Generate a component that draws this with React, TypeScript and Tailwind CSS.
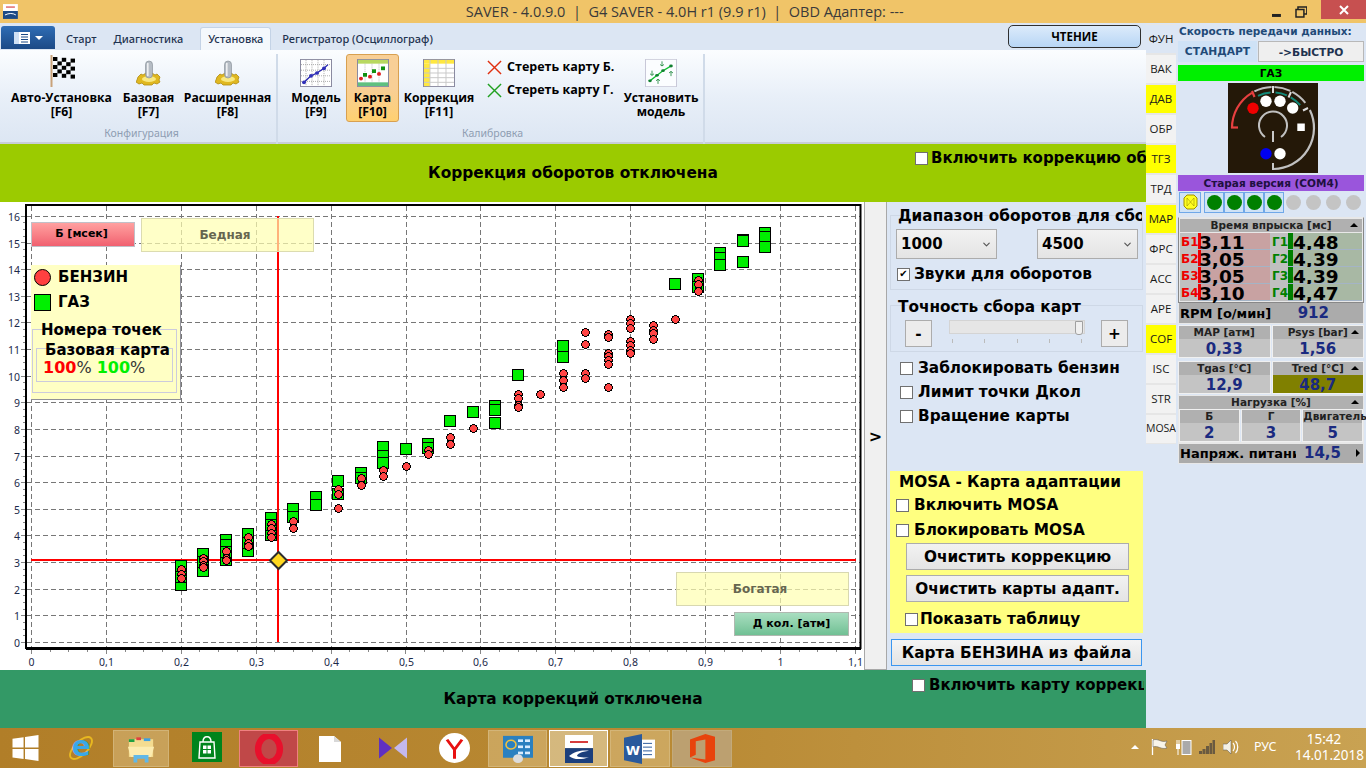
import type { ReactNode } from "react";
import { ChevronDown } from "lucide-react";

const bold = "font-['DejaVu_Sans',sans-serif] font-bold";

const tabs = [
  ["ФУН", "sel"], ["ВАК", ""], ["ДАВ", "y"], ["ОБР", ""], ["ТГЗ", "y"], ["ТРД", ""], ["МАР", "y"],
  ["ФРС", ""], ["АСС", ""], ["АРЕ", ""], ["COF", "y"], ["ISC", ""], ["STR", ""], ["MOSA", ""],
];

// chart points, page coordinates read off the picture
const squares: [number, number][] = [
  [181, 566], [181, 585], [181, 577], [203, 554], [203, 571], [203, 562],
  [226, 540], [226, 545], [226, 560], [226, 552], [248, 534], [248, 551], [248, 543],
  [271, 518], [271, 535], [271, 525], [293, 509], [293, 517], [316, 497], [316, 505],
  [338, 481], [338, 494], [361, 473], [361, 478], [383, 447], [383, 456], [383, 463], [406, 449],
  [428, 444], [428, 448], [450, 421], [473, 412], [495, 406], [495, 410], [495, 423], [518, 375],
  [563, 346], [563, 357], [675, 284], [698, 279], [698, 287], [720, 253], [720, 258], [720, 265],
  [743, 240], [743, 241], [743, 262], [765, 233], [765, 237], [765, 247],
];
const reds: [number, number][] = [
  [181, 569], [181, 574], [181, 578], [203, 558], [203, 561], [203, 565], [203, 567],
  [226, 551], [226, 558], [226, 560], [248, 537], [248, 543], [248, 546],
  [271, 524], [271, 528], [271, 533], [271, 537], [293, 521], [293, 528],
  [338, 489], [338, 494], [338, 508], [361, 478], [361, 485], [383, 470], [383, 476], [406, 466],
  [428, 450], [428, 454], [450, 437], [450, 444], [473, 428],
  [518, 394], [518, 398], [518, 405], [518, 407], [540, 394],
  [563, 373], [563, 380], [563, 387], [585, 332], [585, 344], [585, 373], [585, 378],
  [608, 334], [608, 337], [608, 353], [608, 356], [608, 360], [608, 364], [608, 387],
  [630, 319], [630, 323], [630, 328], [630, 341], [630, 345], [630, 350], [630, 353],
  [653, 325], [653, 330], [653, 333], [653, 339], [675, 319], [698, 280], [698, 284], [698, 291],
];

const xTicks = ["0", "0,1", "0,2", "0,3", "0,4", "0,5", "0,6", "0,7", "0,8", "0,9", "1", "1,1"];

function Chart() {
  const gx = xTicks.map((_, i) => Math.round(31 + i * 74.9) + 0.5);
  const gy = Array.from({ length: 17 }, (_, i) => Math.round(642 - i * 26.63) + 0.5);
  return (
    <svg viewBox="0 202 864 468" className="block h-[468px] w-[864px]">
      <rect x="0" y="202" width="864" height="468" fill="#fff" />
      {gx.map((x) => (
        <line key={x} x1={x} x2={x} y1="206" y2="647" stroke="#777" strokeDasharray="5 3" />
      ))}
      {gy.map((y) => (
        <line key={y} x1="27" x2="860" y1={y} y2={y} stroke="#777" strokeDasharray="5 3" />
      ))}
      {Array.from({ length: 45 }, (_, i) => (
        <line key={i} x1={Math.round(31 + i * 18.72) + 0.5} x2={Math.round(31 + i * 18.72) + 0.5} y1="649" y2={i % 4 === 0 ? 654 : 652} stroke="#888" />
      ))}
      {Array.from({ length: 65 }, (_, i) => (
        <line key={i} x1={i % 4 === 0 ? 21 : 23} x2="25" y1={Math.round(642 - i * 6.66) + 0.5} y2={Math.round(642 - i * 6.66) + 0.5} stroke="#888" />
      ))}
      <path d="M26 205H860.5V648H26Z" fill="none" stroke="#000" strokeWidth="2" />
      <line x1="26" x2="861" y1="648.500" y2="648.500" stroke="#000" strokeWidth="3" />
      {gx.map((x, i) => (
        <text key={x} x={x} y="666" textAnchor="middle" fontFamily="Noto Sans" fontSize="10.5" fill="#1c2a4a">
          {xTicks[i]}
        </text>
      ))}
      {gy.map((y, i) => (
        <text key={y} x="20" y={y + 4} textAnchor="end" fontFamily="Noto Sans" fontSize="10.5" fill="#1c2a4a">
          {i}
        </text>
      ))}
      <line x1="31" x2="856" y1="560" y2="560" stroke="#ff0000" strokeWidth="2" />
      <line x1="278" x2="278" y1="216" y2="642" stroke="#ff0000" strokeWidth="2" />
      {squares.map(([x, y], i) => (
        <rect key={i} x={x - 5.5} y={y - 5.5} width="11" height="11" fill="#00ee00" stroke="#000" strokeWidth="1" shapeRendering="crispEdges" />
      ))}
      {reds.map(([x, y], i) => (
        <circle key={i} cx={x + 0.5} cy={y + 0.5} r="3.8" fill="#ff4444" stroke="#000" strokeWidth="1.2" shapeRendering="crispEdges" />
      ))}
      <path d="M278.500 552L287 560.500L278.500 569L270 560.500Z" fill="#ffd820" stroke="#2c2c2c" strokeWidth="2" />
    </svg>
  );
}

function Checkbox({ checked, className }: { checked?: boolean; className?: string }) {
  return (
    <span className={`flex h-[13px] w-[13px] shrink-0 items-center justify-center border border-[#707070] bg-white text-[10px] leading-none text-black ${className ?? ""}`}>
      {checked ? "✔" : ""}
    </span>
  );
}

function IconFlag() {
  const cells = [];
  for (let r = 0; r < 5; r++) {
    for (let c = 0; c < 5; c++) {
      if ((r + c) % 2 === 0) cells.push(<rect key={`${r}${c}`} x={4 + c * 4.4} y={2 + r * 4 + c * 0.4} width="4.4" height="4" fill="#000" />);
    }
  }
  return (
    <svg width="26" height="32" viewBox="0 0 26 32">
      <line x1="2.500" y1="0" x2="2.500" y2="32" stroke="#c9a27a" strokeWidth="2" />
      {cells}
    </svg>
  );
}

function IconGear() {
  return (
    <svg width="26" height="28" viewBox="0 0 26 28">
      <path d="M2 18l3-3 2 1 3-2h6l3 2 2-1 3 3-1 3 1 2-3 2-3-1-2 2h-8l-2-2-3 1-3-2 1-2z" fill="#e0b820" stroke="#b08c10" strokeWidth="0.8" />
      <ellipse cx="13" cy="20" rx="7" ry="3" fill="#f8e880" />
      <rect x="9.5" y="2" width="7" height="17" rx="3.5" fill="#b5bcc4" stroke="#808890" strokeWidth="0.6" />
      <rect x="11" y="4" width="1.6" height="13" fill="#eef0f2" />
    </svg>
  );
}

function IconFrame({ children }: { children: ReactNode }) {
  return (
    <svg width="32" height="28" viewBox="0 0 32 30" preserveAspectRatio="none">
      <rect x="0.5" y="0.5" width="31" height="29" fill="#fff" stroke="#8a8aa0" />
      {children}
    </svg>
  );
}

function IconModel() {
  return (
    <IconFrame>
      {[6, 12, 18, 24].map((v) => (
        <g key={v} stroke="#aaa" strokeDasharray="1 1">
          <line x1={v} x2={v} y1="1" y2="29" />
          <line y1={v} y2={v} x1="1" x2="31" />
        </g>
      ))}
      <path d="M4 25L11 18L17 15L24 10L28 6" fill="none" stroke="#2a2ab0" strokeWidth="1.4" />
      {[[4, 25], [11, 18], [17, 15], [24, 10]].map(([x, y]) => (
        <circle key={x} cx={x} cy={y} r="2" fill="#3030b8" />
      ))}
    </IconFrame>
  );
}

function IconMap() {
  return (
    <IconFrame>
      <rect x="1" y="1" width="30" height="4" fill="#b8d860" />
      <rect x="1" y="25" width="30" height="4" fill="#60c080" />
      {[8, 15, 22].map((v) => (
        <line key={v} x1={v} x2={v} y1="5" y2="25" stroke="#bbb" strokeDasharray="1 1" />
      ))}
      <circle cx="4" cy="21" r="2" fill="#e02020" />
      <circle cx="13" cy="19" r="2" fill="#e02020" />
      <circle cx="22" cy="16" r="2" fill="#e02020" />
      <rect x="6" y="15" width="4" height="4" fill="#109010" />
      <rect x="15" y="11" width="4" height="4" fill="#109010" />
      <rect x="24" y="8" width="4" height="4" fill="#109010" />
    </IconFrame>
  );
}

function IconTable() {
  return (
    <IconFrame>
      <rect x="1" y="1" width="30" height="4" fill="#ffe840" />
      <rect x="1" y="5" width="6" height="24" fill="#ffe840" />
      {[10, 15, 20, 25].map((v) => (
        <line key={v} x1="1" x2="31" y1={v} y2={v} stroke="#c8c8c8" />
      ))}
      {[7, 15, 23].map((v) => (
        <line key={v} x1={v} x2={v} y1="1" y2="29" stroke="#c8c8c8" />
      ))}
    </IconFrame>
  );
}

function IconSetModel() {
  return (
    <svg width="32" height="28" viewBox="0 0 32 36" preserveAspectRatio="none">
      <rect x="0.5" y="0.5" width="31" height="35" fill="#fbfdff" stroke="#c8c8d8" />
      <path d="M5 28L12 21L18 15L26 9" fill="none" stroke="#10c030" strokeWidth="1.5" />
      {[[5, 28], [12, 21], [18, 15], [26, 9]].map(([x, y]) => (
        <circle key={x} cx={x} cy={y} r="1.8" fill="#108030" />
      ))}
      <path d="M17 3v6M15 7l2 2 2-2M7 15v6M5 19l2 2 2-2M26 22v-6M24 18l2-2 2 2M13 32v-6M11 28l2-2 2 2" fill="none" stroke="#108030" strokeWidth="0.9" />
    </svg>
  );
}

function RibbonButton({ icon, lines, width, active }: { icon: ReactNode; lines: string[]; width: string; active?: boolean }) {
  return (
    <div className={`flex h-full shrink-0 flex-col items-center rounded-[3px] ${width} ${active ? "border border-[#d8a050] bg-gradient-to-b from-[#f8cf96] via-[#f8cf96] to-[#ffd070]" : "border border-transparent"}`}>
      <div className="flex h-[35px] items-end pb-[3px]">{icon}</div>
      <div className="mt-[1px] text-center font-['Open_Sans',sans-serif] text-[12.2px] leading-[14px] font-bold whitespace-nowrap text-black">
        {lines.map((l) => (
          <div key={l}>{l}</div>
        ))}
      </div>
    </div>
  );
}

function Ribbon() {
  return (
    <div className="relative">
      <div className="flex h-[27px] items-end bg-[#dce6f3] font-['Noto_Sans',sans-serif] text-[11px] font-medium text-[#1f3350]">
        <div className="mb-[1px] ml-[1px] flex h-[23px] w-[54px] items-center justify-center gap-[5px] rounded-t-[3px] bg-gradient-to-b from-[#2f6db5] to-[#1c4a86]">
          <svg width="16" height="12" viewBox="0 0 16 12">
            <rect width="16" height="12" fill="#fff" />
            <rect x="0" y="0" width="5" height="12" fill="#cfe0f4" />
            <path d="M7 2.5h7M7 5h7M7 7.5h7M7 10h7" stroke="#1c4a86" />
          </svg>
          <span className="h-0 w-0 border-x-[4px] border-t-[4px] border-x-transparent border-t-white" />
        </div>
        <span className="ml-[11px] pb-[3px]">Старт</span>
        <span className="ml-[17px] pb-[3px]">Диагностика</span>
        <span className="ml-[17px] flex h-[23px] w-[71px] items-center justify-center rounded-t-[3px] border border-b-0 border-[#c4d3e6] bg-[#f4f8fc] pt-[1px]">
          Установка
        </span>
        <span className="ml-[11px] pb-[3px]">Регистратор (Осциллограф)</span>
      </div>
      <button className="absolute top-[2px] left-[1008px] flex h-[23px] w-[133px] items-center justify-center rounded-[5px] border border-[#303030] bg-gradient-to-b from-[#dcebfb] to-[#b8d6f5] font-['Open_Sans',sans-serif] text-[11.5px] font-bold text-black">
        ЧТЕНИЕ
      </button>
      <div className="flex h-[94px] bg-gradient-to-b from-[#fbfdff] via-[#e8eff8] to-[#dce6f3] pt-[4px] shadow-[inset_0_-2px_0_#c8ced6]">
        <div className="flex w-[278px] shrink-0 flex-col border-r-2 border-[#d0dbe9]">
          <div className="flex h-[68px] pl-[5px]">
            <RibbonButton width="w-[113px]" icon={<IconFlag />} lines={["Авто-Установка", "[F6]"]} />
            <RibbonButton width="w-[61px]" icon={<IconGear />} lines={["Базовая", "[F7]"]} />
            <RibbonButton width="w-[97px]" icon={<IconGear />} lines={["Расширенная", "[F8]"]} />
          </div>
          <div className="mt-[3px] pl-[7px] text-center font-['Noto_Sans',sans-serif] text-[10.5px] leading-[16px] text-[#8e9db2]">Конфигурация</div>
        </div>
        <div className="flex w-[427px] shrink-0 flex-col border-r-2 border-[#d0dbe9]">
          <div className="flex h-[68px] pl-[8px]">
            <RibbonButton width="w-[60px]" icon={<IconModel />} lines={["Модель", "[F9]"]} />
            <RibbonButton width="w-[53px]" active icon={<IconMap />} lines={["Карта", "[F10]"]} />
            <RibbonButton width="w-[80px]" icon={<IconTable />} lines={["Коррекция", "[F11]"]} />
            <div className="ml-[8px] flex w-[137px] shrink-0 flex-col gap-[7px] pt-[5px] font-['Open_Sans',sans-serif] text-[12.5px] leading-[16px] font-bold whitespace-nowrap text-black">
              <div className="flex items-center gap-[5px]">
                <svg width="15" height="15" viewBox="0 0 16 16"><path d="M1 1L15 15M15 1L1 15" stroke="#e03010" strokeWidth="1.5" /></svg>
                Стереть карту Б.
              </div>
              <div className="flex items-center gap-[5px]">
                <svg width="15" height="15" viewBox="0 0 16 16"><path d="M1 1L15 15M15 1L1 15" stroke="#20a020" strokeWidth="1.5" /></svg>
                Стереть карту Г.
              </div>
            </div>
            <RibbonButton width="w-[74px]" icon={<IconSetModel />} lines={["Установить", "модель"]} />
          </div>
          <div className="mt-[3px] pl-[4px] text-center font-['Noto_Sans',sans-serif] text-[10.5px] leading-[16px] text-[#8e9db2]">Калибровка</div>
        </div>
      </div>
    </div>
  );
}

function ChartOverlays() {
  return (
    <>
      <div className="absolute top-[20px] left-[31px] flex h-[25px] w-[104px] items-center justify-center border border-[#c0c0c8] bg-gradient-to-b from-[#ffa0a0] to-[#f06070] pr-[3px] font-['DejaVu_Sans',sans-serif] text-[11px] font-bold text-black">
        Б [мсек]
      </div>
      <div className="absolute top-[16px] left-[141px] flex h-[34px] w-[173px] items-center justify-center border border-[#dcdcb0] bg-[#ffffb0]/70 pr-[5px] font-['DejaVu_Sans',sans-serif] text-[12px] font-bold text-[#666650]">
        Бедная
      </div>
      <div className="absolute top-[63px] left-[31px] h-[135px] w-[150px] border-r border-b border-[#909098] bg-[#ffffc4] text-black">
        <div className={`${bold} flex items-center gap-[7px] pt-[3px] pl-[3px] text-[15px] leading-[19px]`}>
          <span className="h-[17px] w-[17px] rounded-full border border-black bg-[#ff4040]" />
          БЕНЗИН
        </div>
        <div className={`${bold} mt-[6px] flex items-center gap-[7px] pl-[3px] text-[15px] leading-[19px]`}>
          <span className="h-[17px] w-[17px] border border-black bg-[#00f000]" />
          ГАЗ
        </div>
        <div className="mx-[1px] mt-[17px] h-[64px] w-[145px] border border-[#cccbdc]">
          <div className={`${bold} -mt-[8px] pl-[8px] text-[15px] leading-[17px] whitespace-nowrap`}>Номера точек</div>
          <div className="mx-[3px] mt-[9px] h-[34px] w-[137px] border border-[#cccbdc]">
            <div className={`${bold} -mt-[8px] pl-[8px] text-[15px] leading-[18px] whitespace-nowrap`}>Базовая карта</div>
            <div className="pl-[6px] font-['DejaVu_Sans',sans-serif] text-[16px] leading-[18px] text-[#333]">
              <b className="text-[#ff0000]">100</b>% <b className="text-[#00f000]">100</b>%
            </div>
          </div>
        </div>
      </div>
      <div className="absolute top-[370px] left-[676px] flex h-[34px] w-[173px] items-center justify-center border border-[#d8d8b0] bg-[#ffffb0]/70 pr-[5px] font-['DejaVu_Sans',sans-serif] text-[12px] font-bold text-[#666650]">
        Богатая
      </div>
      <div className="absolute top-[410px] left-[734px] flex h-[24px] w-[115px] items-center justify-center border border-[#b0b8b0] bg-gradient-to-b from-[#a8dec0] to-[#70c094] font-['DejaVu_Sans',sans-serif] text-[11px] font-bold text-black">
        Д кол. [атм]
      </div>
    </>
  );
}

function Select({ value, className }: { value: string; className?: string }) {
  return (
    <div className={`flex h-[30px] w-[101px] items-center justify-between border border-[#acacac] bg-gradient-to-b from-[#f2f2f2] to-[#e4e4e4] pr-[4px] pl-[4px] ${className ?? ""}`}>
      <span className={`${bold} text-[15px] text-black`}>{value}</span>
      <ChevronDown size={11} strokeWidth={2.5} className="text-[#555]" />
    </div>
  );
}

function SidePanel() {
  return (
    <div className={`${bold} flex w-[259px] shrink-0 flex-col bg-[#dce6f4] pl-[3px] text-[15.3px] leading-[18px] text-black`}>
      <div className="mt-[13px] h-[75px] w-[253px] border border-[#ced8e6]">
        <div className="-mt-[9px] overflow-hidden pl-[7px] whitespace-nowrap">Диапазон оборотов для сбора</div>
        <div className="mt-[4px] flex justify-between pr-[4px] pl-[5px]">
          <Select value="1000" />
          <Select value="4500" />
        </div>
        <div className="mt-[6px] flex items-center gap-[4px] pl-[6px]">
          <Checkbox checked />
          Звуки для оборотов
        </div>
      </div>
      <div className="mt-[15px] h-[47px] w-[253px] border border-[#ced8e6]">
        <div className="-mt-[8px] pl-[7px]">Точность сбора карт</div>
        <div className="mt-[4px] flex items-start pl-[14px]">
          <span className="flex h-[27px] w-[27px] items-center justify-center border border-[#acacac] bg-[#ececec]">-</span>
          <div className="ml-[17px] w-[136px]">
            <div className="flex h-[14px] justify-end border border-[#d4d4d4] bg-[#e6e6e6] pr-[1px]">
              <span className="h-[14px] w-[8px] rounded-b-[3px] border border-[#a0a0a0] bg-[#f0f0f0]" />
            </div>
            <div className="mt-[5px] flex justify-between px-[3px]">
              {[0, 1, 2, 3, 4].map((t) => (
                <span key={t} className="h-[4px] w-[1px] bg-[#bbb]" />
              ))}
            </div>
          </div>
          <span className="ml-[16px] flex h-[27px] w-[27px] items-center justify-center border border-[#acacac] bg-[#ececec]">+</span>
        </div>
      </div>
      <div className="mt-[7px] flex flex-col gap-[6px] pl-[10px]">
        <div className="flex items-center gap-[5px]"><Checkbox />Заблокировать бензин</div>
        <div className="flex items-center gap-[5px]"><Checkbox />Лимит точки Дкол</div>
        <div className="flex items-center gap-[5px]"><Checkbox />Вращение карты</div>
      </div>
      <div className="mt-[46px] flex h-[162px] w-[253px] flex-col bg-[#ffff80] pt-[1px]">
        <div className="pt-[1px] pl-[9px]">MOSA - Карта адаптации</div>
        <div className="mt-[5px] flex items-center gap-[5px] pl-[6px]"><Checkbox />Включить MOSA</div>
        <div className="mt-[7px] flex items-center gap-[5px] pl-[6px]"><Checkbox />Блокировать MOSA</div>
        <div className="mt-[4px] ml-[16px] flex h-[27px] w-[223px] items-center justify-center border border-[#acacac] bg-gradient-to-b from-[#f2f2f2] to-[#e4e4e4]">Очистить коррекцию</div>
        <div className="mt-[5px] ml-[16px] flex h-[27px] w-[223px] items-center justify-center border border-[#acacac] bg-gradient-to-b from-[#f2f2f2] to-[#e4e4e4]">Очистить карты адапт.</div>
        <div className="mt-[8px] flex items-center gap-[2px] pl-[15px]"><Checkbox />Показать таблицу</div>
      </div>
      <div className="mt-[6px] ml-[1px] flex h-[27px] w-[251px] items-center justify-center border border-[#3a96f0] bg-gradient-to-b from-[#f4f4f4] to-[#e4e4e4] pt-[1px]">
        Карта БЕНЗИНА из файла
      </div>
    </div>
  );
}

function EngineDiagram() {
  const arc = (r: number, a: number, b: number) => {
    const pt = (d: number) => {
      const t = (d * Math.PI) / 180;
      return `${(45 + r * Math.sin(t)).toFixed(2)} ${(45 - r * Math.cos(t)).toFixed(2)}`;
    };
    return `M${pt(a)}A${r} ${r} 0 ${b - a > 180 ? 1 : 0} 1 ${pt(b)}`;
  };
  return (
    <svg width="90" height="90" viewBox="0 0 90 90" className="block">
      <rect width="90" height="90" fill="#241808" />
      <path d={arc(41, 64, 179)} fill="none" stroke="#c0c0c0" strokeWidth="2.2" />
      <path d={arc(41, -90, -31)} fill="none" stroke="#e84040" strokeWidth="2.2" />
      <path d="M3 44.5h7" stroke="#e84040" strokeWidth="2.2" />
      <path d="M24 8l2.5 6" stroke="#e84040" strokeWidth="2.2" />
      {[[-27, -2], [2, 25], [28, 52]].map(([a, b]) => (
        <g key={a} fill="none" strokeWidth="2">
          <path d={arc(41, a, b)} stroke="#c0c0c0" />
          <path d={arc(35.5, a + 2, b - 2)} stroke="#108878" />
        </g>
      ))}
      <path d="M45 3v7M63 9l-2.5 5.5M80 25l-5 2.5" stroke="#ddd" strokeWidth="2" />
      {[[38, 18.3], [52, 18.3], [64.7, 25], [52, 70.7]].map(([x, y]) => (
        <circle key={`${x}${y}`} cx={x} cy={y} r="5.7" fill="#fff" />
      ))}
      <circle cx="25" cy="25.3" r="5.7" fill="#f00000" />
      <circle cx="38" cy="70.7" r="5.7" fill="#0000f0" />
      <rect x="69.3" y="40.5" width="7.5" height="7.5" fill="#fff" />
      <path d="M37 54A14 14 0 1 1 53 54" fill="none" stroke="#c0c0c0" strokeWidth="2" />
      <path d="M45 48v11M45 80v7" stroke="#c8c8c8" strokeWidth="2" />
    </svg>
  );
}

function InjectionRow({ l, lv, r, rv }: { l: string; lv: string; r: string; rv: string }) {
  return (
    <div className={`${bold} flex h-[17px] bg-[#c0c0c0] leading-[19px]`}>
      <span className="w-[18px] shrink-0 pl-[1px] text-[12px] text-[#ee0000]">{l}</span>
      <div className="flex w-[72px] border-b border-[#a4b4c6] bg-[#c8a2a2] text-[18.5px] text-black">
        <span className="-mr-[2px] w-[3px] shrink-0 bg-[#ee0000]" />
        <span className="relative">{lv}</span>
      </div>
      <span className="w-[18px] shrink-0 pl-[2px] text-[12px] text-[#008000]">{r}</span>
      <div className="flex min-w-0 flex-1 border-b border-[#a4b4c6] bg-[#a8b8a4] text-[18.5px] text-black">
        <span className="w-[5px] shrink-0 bg-[#008000]" />
        {rv}
      </div>
    </div>
  );
}

function Reading({ title, value, valueBg, arrow, className }: { title: string; value: string; valueBg?: string; arrow?: boolean; className?: string }) {
  return (
    <div className={`flex min-w-0 flex-1 flex-col border border-[#f0f0f0] ${className ?? ""}`}>
      <div className={`${bold} relative h-[13px] bg-[#b0b0b0] text-center text-[10.5px] leading-[13px] text-[#222]`}>
        {title}
        {arrow && <span className="absolute top-[4px] right-[4px] h-0 w-0 border-x-[4px] border-b-[4px] border-x-transparent border-b-black" />}
      </div>
      <div className={`${bold} h-[18px] ${valueBg ?? "bg-[#c4c4c4]"} text-center text-[15px] leading-[20px] text-[#1a2a80]`}>{value}</div>
    </div>
  );
}

function Status() {
  return (
    <div className="flex w-[190px] shrink-0 flex-col bg-[#dce6f4] px-[2px]">
      <div className={`${bold} h-[18px] pl-[1px] text-[10.5px] leading-[17px] whitespace-nowrap text-[#1f4a78]`}>Скорость передачи данных:</div>
      <div className={`${bold} flex h-[21px] text-[10.7px] leading-[21px]`}>
        <span className="w-[79px] bg-[#cfe2f6] text-center text-[#1f4a78]">СТАНДАРТ</span>
        <span className="ml-[1px] flex-1 border border-[#b8b8b8] bg-[#efefef] text-center text-[#1f3350]">-&gt;БЫСТРО</span>
      </div>
      <div className={`${bold} mt-[3px] h-[16px] bg-[#00f000] text-center text-[10.5px] leading-[16px] text-black`}>ГАЗ</div>
      <div className="mt-[2px] flex justify-center pl-[4px]"><EngineDiagram /></div>
      <div className={`${bold} mt-[2px] h-[16px] bg-[#9a55dc] text-center text-[10.5px] leading-[16px] text-[#201040]`}>Старая версия (COM4)</div>
      <div className="flex h-[22px] items-center pl-[1px]">
        <span className="flex h-[21px] w-[22px] items-center justify-center border border-[#70a8e8] bg-[#cfe2f6]">
          <svg width="15" height="16" viewBox="0 0 15 16"><path d="M4 1H11L14 4V12L11 15H4L1 12V4Z" fill="#ffff20" stroke="#a09000" /><path d="M4 4L11 12M11 4L4 12M4 4V12M11 4V12" stroke="#a09000" strokeWidth="0.6" /></svg>
        </span>
        <div className="ml-[3px] flex">
          {[0, 1, 2, 3].map((n) => (
            <span key={n} className="flex h-[21px] w-[20px] items-center justify-center border border-[#70a8e8] bg-[#cfe2f6]">
              <span className="h-[15px] w-[15px] rounded-full bg-[#008000]" />
            </span>
          ))}
        </div>
        <div className="-ml-[1px] flex">
          {[0, 1, 2, 3].map((n) => (
            <span key={n} className="flex h-[21px] w-[20px] items-center justify-center">
              <span className="h-[15px] w-[15px] rounded-full bg-[#c4c4c4]" />
            </span>
          ))}
        </div>
      </div>

      <div className="mt-[4px] border border-[#888] border-t-[#e8e8e8] bg-[#e8e8e8] p-[1px]">
        <div className={`${bold} relative h-[13px] bg-[#b0b0b0] text-center text-[10.5px] leading-[13px] text-[#222]`}>
          Время впрыска [мс]
          <span className="absolute top-[4px] right-[4px] h-0 w-0 border-x-[4px] border-b-[4px] border-x-transparent border-b-black" />
        </div>
        <div className="mt-[1px] bg-[#c0c0c0]">
          <InjectionRow l="Б1" lv="3,11" r="Г1" rv="4,48" />
          <InjectionRow l="Б2" lv="3,05" r="Г2" rv="4,39" />
          <InjectionRow l="Б3" lv="3,05" r="Г3" rv="4,39" />
          <InjectionRow l="Б4" lv="3,10" r="Г4" rv="4,47" />
        </div>
      </div>
      <div className={`${bold} flex h-[21px] items-center justify-between border-x border-b border-[#e8e8e8] bg-[#ababab] pt-[1px] pr-[34px] pl-[1px] text-[13px] text-black`}>
        RPM [о/мин]
        <span className="text-[15px] text-[#1a2a80]">912</span>
      </div>
      <div className="mt-[1px] flex gap-[1px]">
        <Reading title="MAP [атм]" value="0,33" />
        <Reading title="Psys [bar]" value="1,56" arrow />
      </div>
      <div className="mt-[3px] flex gap-[1px]">
        <Reading title="Tgas [°C]" value="12,9" />
        <Reading title="Tred [°C]" value="48,7" valueBg="bg-[#808000]" arrow />
      </div>
      <div className="mt-[1px] border border-[#e8e8e8]">
        <div className={`${bold} relative h-[13px] bg-[#b0b0b0] text-center text-[10.5px] leading-[13px] text-[#222]`}>
          Нагрузка [%]
          <span className="absolute top-[4px] right-[4px] h-0 w-0 border-x-[4px] border-b-[4px] border-x-transparent border-b-black" />
        </div>
        <div className="flex gap-[1px]">
          <Reading title="Б" value="2" />
          <Reading title="Г" value="3" />
          <Reading title="Двигатель" value="5" />
        </div>
      </div>
      <div className={`${bold} relative flex h-[21px] items-center justify-between overflow-hidden border border-[#e8e8e8] bg-[#ababab] pr-[22px] pl-[1px] text-[13px] whitespace-nowrap text-black`}>
        <span className="w-[116px] overflow-hidden">Напряж. питания</span>
        <span className="text-[15px] text-[#1a2a80]">14,5</span>
        <span className="absolute top-[5px] right-[3px] h-0 w-0 border-y-[4px] border-l-[4px] border-y-transparent border-l-black" />
      </div>
    </div>
  );
}

function Box({ x, w, bg, children }: { x: string; w: string; bg: string; children: ReactNode }) {
  return <div className={`flex h-[37px] items-center justify-center ${x} ${w} ${bg}`}>{children}</div>;
}

function Taskbar() {
  const box = "border border-[#d9bf8a]/60 bg-[#f0dcb0]/35";
  return (
    <div className="flex h-[40px] shrink-0 items-end bg-gradient-to-r from-[#b17e28] via-[#b98a34] to-[#c9a252] pb-[1px]">
      <div className="ml-[12px] flex h-[37px] w-[27px] items-center pb-[2px]">
        <svg width="27" height="26" viewBox="0 0 27 27"><path d="M0 4L11.5 2.3V13H0ZM13 2L27 0V13H13ZM0 14.5H11.5V25L0 23.3ZM13 14.5H27V27L13 25Z" fill="#fff" /></svg>
      </div>
      <div className="ml-[27px] flex h-[37px] w-[30px] items-center pb-[2px]">
        <svg width="30" height="30" viewBox="0 0 30 32">
          <ellipse cx="15" cy="16" rx="15" ry="7" transform="rotate(-45 15 16)" fill="none" stroke="#e8b820" strokeWidth="2" />
          <text x="15" y="25" textAnchor="middle" fontFamily="DejaVu Sans" fontWeight="700" fontSize="30" fill="#3aa8e8">e</text>
        </svg>
      </div>
      <Box x="ml-[17px]" w="w-[56px]" bg={box}>
        <svg width="28" height="30" viewBox="0 0 30 31">
          <path d="M2 5H28V24H2Z" fill="#f4dc90" />
          <path d="M2 5h6v3h-6z" fill="#20a040" /><rect x="10" y="3" width="5" height="3" fill="#e04040" /><rect x="18" y="4" width="7" height="3" fill="#40a0e0" />
          <path d="M1 13H29L26 24H4Z" fill="#fcecb0" />
          <path d="M7 22H23V30H19V26H11V30H7Z" fill="#60b8e8" />
        </svg>
      </Box>
      <div className="ml-[23px] flex h-[37px] w-[30px] items-center pb-[3px]">
        <svg width="30" height="30" viewBox="0 0 30 30">
          <rect width="30" height="30" fill="#00841c" />
          <path d="M8 10H22L23 26H7Z" fill="none" stroke="#fff" strokeWidth="1.4" />
          <path d="M11 10C11 3 19 3 19 10" fill="none" stroke="#fff" strokeWidth="1.4" />
          <path d="M11 13.500h3.500v3.500H11ZM15.500 13.500H19v3.500h-3.500ZM11 18h3.500v3.500H11ZM15.500 18H19v3.500h-3.500Z" fill="#fff" />
        </svg>
      </div>
      <Box x="ml-[17px]" w="w-[59px]" bg="border border-[#f08080] bg-[#c04848]">
        <svg width="32" height="30" viewBox="0 0 32 33"><ellipse cx="16" cy="16.5" rx="12" ry="14.5" fill="none" stroke="#e8102c" strokeWidth="7" /></svg>
      </Box>
      <div className="ml-[21px] flex h-[37px] w-[22px] items-center">
        <svg width="22" height="26" viewBox="0 0 22 30" preserveAspectRatio="none"><path d="M0 0H15L22 7V30H0Z" fill="#fff" /><path d="M15 0V7H22" fill="#d8d8d8" /></svg>
      </div>
      <div className="ml-[38px] flex h-[37px] w-[28px] items-center pb-[2px]">
        <svg width="28" height="24" viewBox="0 0 28 32" preserveAspectRatio="none"><path d="M0 2L13 16L0 30Z" fill="#6030c0" /><path d="M28 2L15 16L28 30Z" fill="#c4b8ee" /></svg>
      </div>
      <div className="ml-[32px] flex h-[37px] w-[31px] items-center pb-[2px]">
        <svg width="31" height="30" viewBox="0 0 31 36" preserveAspectRatio="none"><ellipse cx="15.5" cy="18" rx="15.5" ry="18" fill="#fff" /><path d="M8 8L15.5 20L23 8M15.5 20V31" fill="none" stroke="#e81010" strokeWidth="3" /></svg>
      </div>
      <Box x="ml-[18px]" w="w-[59px]" bg={box}>
        <svg width="32" height="28" viewBox="0 0 32 32" preserveAspectRatio="none">
          <rect x="1" y="1" width="30" height="25" fill="#2a80c0" />
          <rect x="16" y="5" width="5" height="3" fill="#d8ecff" /><rect x="23" y="5" width="5" height="3" fill="#d8ecff" /><rect x="16" y="12" width="5" height="3" fill="#d8ecff" /><rect x="23" y="12" width="5" height="3" fill="#d8ecff" /><rect x="16" y="19" width="5" height="3" fill="#d8ecff" /><rect x="23" y="19" width="5" height="3" fill="#d8ecff" />
          <circle cx="9" cy="11" r="5" fill="none" stroke="#f0c040" strokeWidth="1.6" />
          <circle cx="16" cy="27" r="5" fill="#dcdcdc" />
        </svg>
      </Box>
      <Box x="ml-[2px]" w="w-[59px]" bg="border border-white bg-[#e8d8b0]/60">
        <svg width="28" height="28" viewBox="0 0 28 32" preserveAspectRatio="none">
          <rect width="28" height="15" fill="#fff" /><rect y="15" width="28" height="17" fill="#1c3f7c" />
          <line x1="5" x2="23" y1="8" y2="8" stroke="#d02020" strokeWidth="2" />
          <path d="M4 24C10 18 18 17 24 18C16 19 12 22 12 24C15 26 20 26 24 25C16 29 8 28 4 24Z" fill="#fff" />
        </svg>
      </Box>
      <Box x="ml-[2px]" w="w-[60px]" bg={box}>
        <svg width="32" height="30" viewBox="0 0 32 32" preserveAspectRatio="none">
          <path d="M16 6H31V26H16Z" fill="#fff" /><path d="M19 10h9M19 14h9M19 18h9M19 22h9" stroke="#2a5a9c" />
          <path d="M0 4L18 0V32L0 28Z" fill="#2a5a9c" />
          <text x="9" y="22" textAnchor="middle" fontFamily="DejaVu Sans" fontWeight="700" fontSize="13" fill="#fff">W</text>
        </svg>
      </Box>
      <Box x="ml-[2px]" w="w-[60px]" bg="border border-[#c8b080]/60 bg-[#bca070]">
        <svg width="25" height="29" viewBox="0 0 26 32" preserveAspectRatio="none"><path d="M0 6L16 0L26 3V29L16 32L0 26L16 28V6L6 8V23L0 26Z" fill="#e8430c" /></svg>
      </Box>
      <div className="flex h-[37px] flex-1 items-center pb-[3px] font-['Noto_Sans',sans-serif] text-white">
        <span className="ml-[399px] h-0 w-0 border-x-[4px] border-b-[4px] border-x-transparent border-b-white" />
        <svg width="17" height="16" viewBox="0 0 17 16" className="ml-[12px]"><path d="M1.5 0V16" stroke="#fff" strokeWidth="1.3" /><path d="M2 1C7 -1 10 4 16 2L14 6L16 9C10 11 7 6 2 8Z" fill="#f8f4e8" stroke="#555" strokeWidth="0.5" /></svg>
        <svg width="17" height="17" viewBox="0 0 17 17" className="ml-[7px]"><rect x="7" y="1.5" width="9" height="14" fill="#aaa" stroke="#fff" /><rect x="1" y="5" width="4" height="5" fill="#fff" /><path d="M2 1v4M4 1v4M3 10v6" stroke="#fff" /></svg>
        <svg width="16" height="14" viewBox="0 0 16 14" className="ml-[7px]"><path d="M0 11h3v3H0ZM3.5 9h3v5h-3ZM7 6h3v8H7ZM10.500 3h2.500v11h-2.500ZM13.500 0H16v14h-2.500Z" fill="#6a5a40" /></svg>
        <svg width="16" height="16" viewBox="0 0 16 16" className="ml-[8px]"><path d="M0 5H4L8 1V15L4 11H0Z" fill="#f4f0e4" stroke="#555" strokeWidth="0.5" /><path d="M10 4C12 6 12 10 10 12M12.500 2C15.500 5 15.500 11 12.500 14" fill="none" stroke="#fff" strokeWidth="1.2" /></svg>
        <span className="ml-[15px] w-[24px] text-[12.5px] whitespace-nowrap">РУС</span>
        <div className="ml-[17px] w-[58px] text-center text-[13.5px] leading-[16px] whitespace-nowrap">
          <div>15:42</div>
          <div>14.01.2018</div>
        </div>
      </div>
    </div>
  );
}

export default function App() {
  return (
    <div className="flex h-[768px] w-[1366px] flex-col overflow-hidden bg-[#dce6f4]">
      <div className="flex h-[23px] shrink-0 items-center bg-[#f0c468]">
        <svg width="15" height="15" viewBox="0 0 15 15" className="ml-[3px]">
          <rect width="15" height="7" fill="#fff" /><rect y="7" width="15" height="8" fill="#1c4a86" />
          <line x1="3" x2="12" y1="3" y2="3" stroke="#d02020" />
          <path d="M2 11C6 9 10 9 13 11" stroke="#fff" fill="none" />
        </svg>
        <div className="ml-[448px] w-[440px] font-['Open_Sans',sans-serif] text-[14.5px] whitespace-pre text-[#3a3a3a]">
          SAVER - 4.0.9.0  |  G4 SAVER - 4.0H r1 (9.9 r1)  |  OBD Адаптер: ---
        </div>
        <svg width="10" height="10" viewBox="0 0 10 10" className="ml-[368px]"><rect y="7" width="9" height="3" fill="#222" /></svg>
        <svg width="13" height="12" viewBox="0 0 13 12" className="ml-[13px]"><path d="M3 3V1H12V8H9.500M1 3.500H9V11H1Z" fill="none" stroke="#222" strokeWidth="1.500" /></svg>
        <div className="ml-[14px] flex h-[19px] w-[45px] -translate-y-[2px] items-center justify-center bg-[#c75050]">
          <svg width="10" height="10" viewBox="0 0 10 10"><path d="M1 1L9 9M9 1L1 9" stroke="#fff" strokeWidth="2" /></svg>
        </div>
      </div>
      <div className="flex min-h-0 flex-1">
        <main className="flex w-[1146px] shrink-0 flex-col overflow-hidden">
          <Ribbon />
          <div className="relative flex h-[58px] shrink-0 items-center justify-center bg-[#9bcb00] pt-[1px]">
            <span className={`${bold} text-[15.4px] text-black`}>Коррекция оборотов отключена</span>
            <div className={`${bold} absolute top-[3px] left-[915px] flex w-[231px] items-center gap-[3px] overflow-hidden text-[15px] whitespace-nowrap text-black`}>
              <Checkbox />
              Включить коррекцию оборотов
            </div>
          </div>
          <div className="flex h-[468px] shrink-0">
            <div className="relative h-[468px] w-[864px] shrink-0 bg-white">
              <Chart />
              <ChartOverlays />
            </div>
            <div className={`${bold} flex w-[23px] shrink-0 items-end justify-center border-x border-b border-[#a8a8a8] bg-[#f0f0f0] pb-[224px] text-[16px] leading-none text-black`}>&gt;</div>
            <SidePanel />
          </div>
          <div className="relative flex h-[58px] shrink-0 items-center justify-center bg-[#339966] pt-[2px]">
            <span className={`${bold} text-[15.4px] text-black`}>Карта коррекций отключена</span>
            <div className={`${bold} absolute top-[4px] left-[912px] flex w-[232px] items-center gap-[4px] overflow-hidden text-[15px] whitespace-nowrap text-black`}>
              <Checkbox />
              Включить карту коррекций
            </div>
          </div>
        </main>
        <div className="w-[30px] shrink-0 pt-[1px] font-['Open_Sans',sans-serif] text-[11.5px] text-[#1a1a1a]">
          {tabs.map(([name, kind]) => (
            <div
              key={name}
              className={`flex h-[30px] items-center justify-center overflow-hidden border-y border-[#e6e6e6] ${kind === "y" ? "bg-[#ffff00]" : kind === "sel" ? "bg-[#dce6f4]" : "bg-[#f2f2f2]"} ${name === "MOSA" ? "text-[10.5px]" : ""}`}
            >
              {name}
            </div>
          ))}
        </div>
        <Status />
      </div>
      <Taskbar />
    </div>
  );
}
